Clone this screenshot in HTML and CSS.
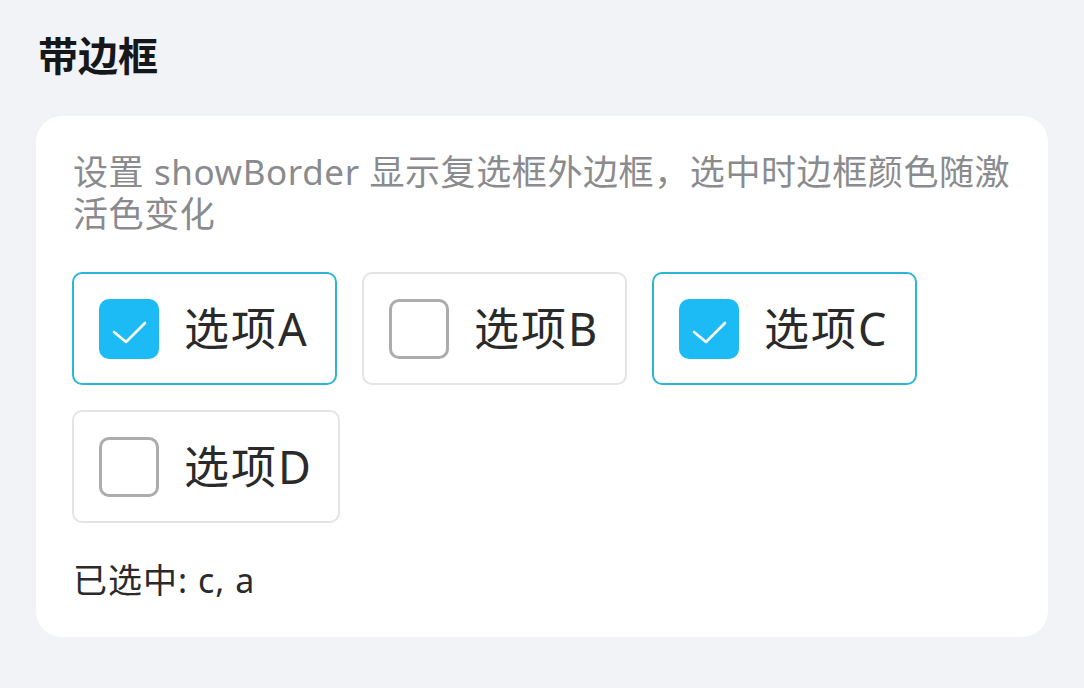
FILE: index.html
```html
<!DOCTYPE html>
<html lang="zh-CN">
<head>
<meta charset="utf-8">
<link rel="stylesheet" href="styles.css">
</head>
<body>
<div class="page">
  <h1 class="title">带边框</h1>
  <div class="card">
    <p class="desc">设置 showBorder 显示复选框外边框，选中时边框颜色随激活色变化</p>
    <div class="options">
      <div class="opt checked">
        <span class="box"><svg viewBox="0 0 60 60" width="60" height="60"><path d="M15 33 L27 43 L46 24" fill="none" stroke="#fff" stroke-width="2.6" stroke-linecap="round" stroke-linejoin="round"/></svg></span>
        <span class="label">选项A</span>
      </div>
      <div class="opt">
        <span class="box"></span>
        <span class="label">选项B</span>
      </div>
      <div class="opt checked">
        <span class="box"><svg viewBox="0 0 60 60" width="60" height="60"><path d="M15 33 L27 43 L46 24" fill="none" stroke="#fff" stroke-width="2.6" stroke-linecap="round" stroke-linejoin="round"/></svg></span>
        <span class="label">选项C</span>
      </div>
      <div class="opt">
        <span class="box"></span>
        <span class="label">选项D</span>
      </div>
    </div>
    <p class="result">已选中: c, a</p>
  </div>
</div>
</body>
</html>
```
FILE: styles.css
```css
* { box-sizing: border-box; }
html, body {
  margin: 0;
  padding: 0;
  background: #f2f3f7;
}
body {
  font-family: "Noto Sans", "Noto Sans CJK SC", sans-serif;
  color: #222;
}
.page {
  padding: 28px 36px 0 36px;
}
.title {
  margin: 0 0 0 2px;
  font-size: 40px;
  font-weight: 700;
  line-height: 56px;
  color: #16171a;
}
.card {
  margin-top: 32px;
  background: #fff;
  border-radius: 26px;
  padding: 35px 37px 34px 36px;
  height: 521px;
}
.desc {
  margin: 0 0 0 1px;
  font-size: 35px;
  line-height: 42px;
  letter-spacing: 0.6px;
  color: #8a8b8e;
}
.options {
  display: flex;
  flex-wrap: wrap;
  gap: 25px;
  margin-top: 37px;
  width: 880px;
}
.opt {
  display: flex;
  align-items: center;
  gap: 25px;
  min-width: 265px;
  padding: 24px 25px 24px 25px;
  border: 2px solid #e4e4e6;
  border-radius: 10px;
  height: 113px;
}
.opt.checked {
  border-color: #2bb5d8;
}
.box {
  width: 60px;
  height: 60px;
  border-radius: 10px;
  border: 3px solid #acacae;
  flex: none;
}
.checked .box {
  border: none;
  background: #1cbbf6;
}
.box svg { display: block; }
.label {
  font-size: 45px;
  line-height: 58px;
  letter-spacing: 2px;
  color: #2a2a2a;
}
.result {
  margin: 35px 0 0 1px;
  font-size: 34px;
  line-height: 44px;
  letter-spacing: 1px;
  color: #2a2a2a;
}
```
